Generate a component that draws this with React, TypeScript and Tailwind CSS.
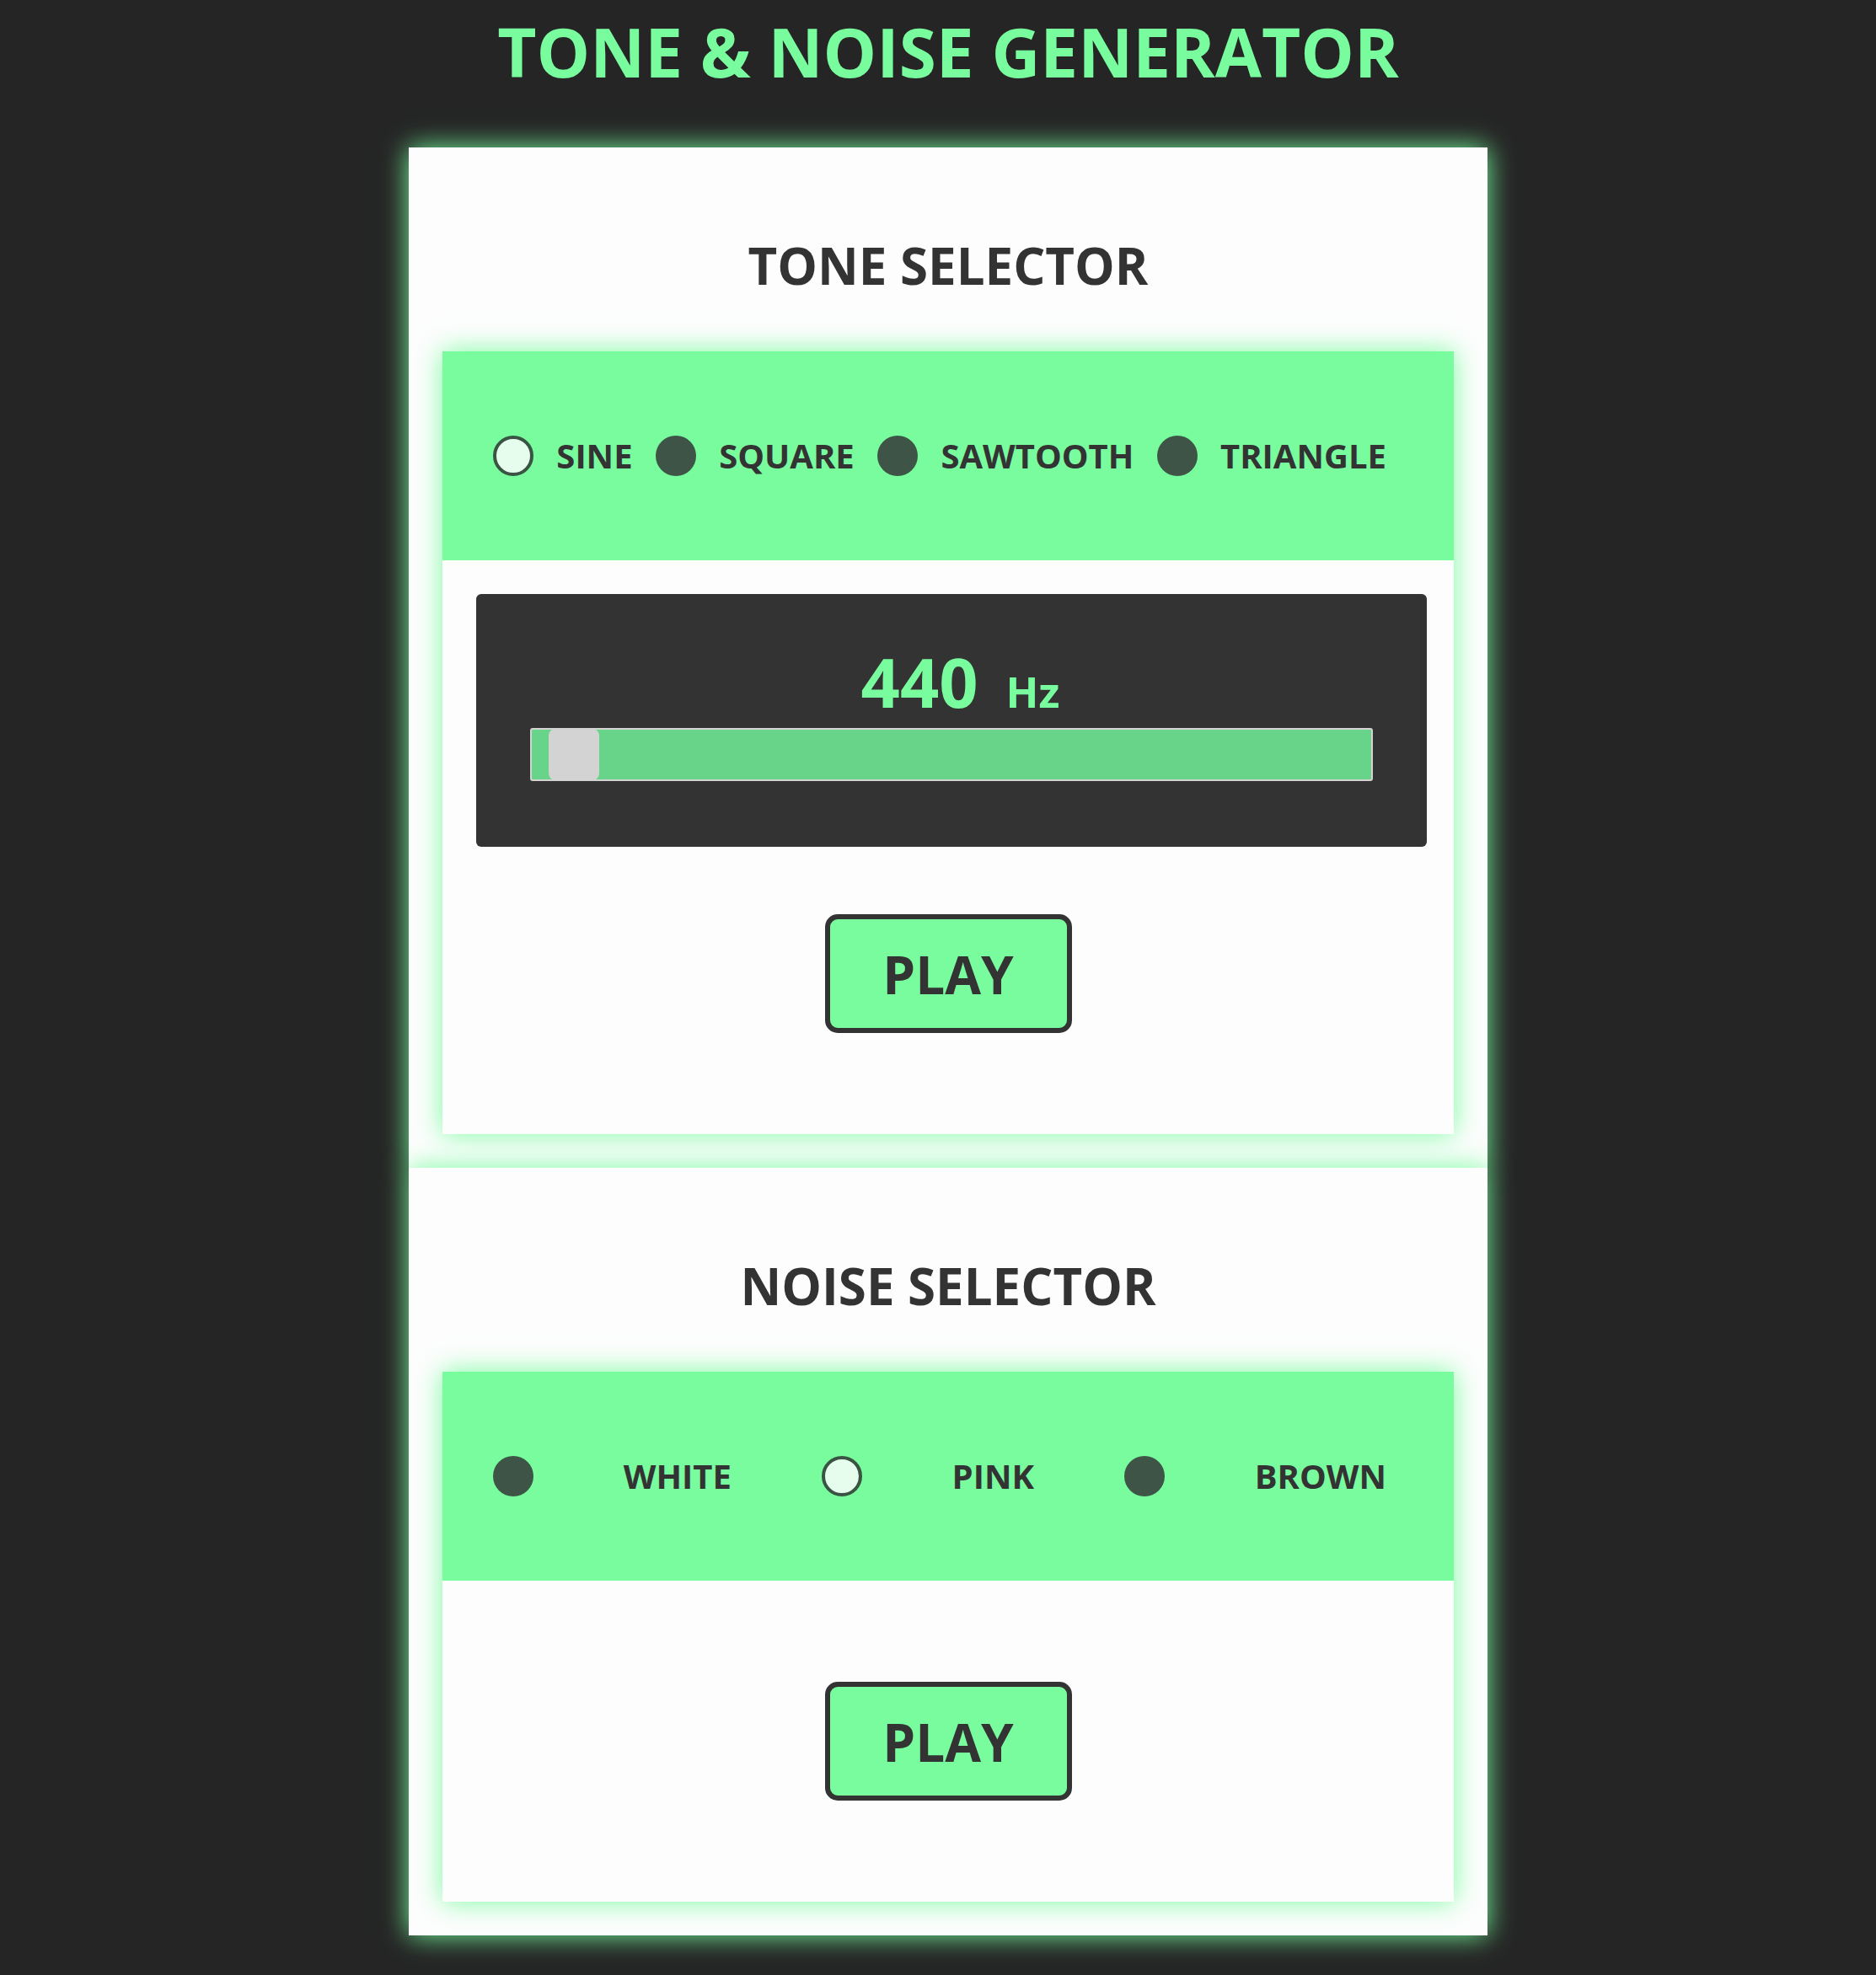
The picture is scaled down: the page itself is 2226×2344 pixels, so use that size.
const font = { fontFamily: '"Open Sans", "Noto Sans", sans-serif' };

type Option = { label: string; checked?: boolean };

const tones: Option[] = [
  { label: 'SINE', checked: true },
  { label: 'SQUARE' },
  { label: 'SAWTOOTH' },
  { label: 'TRIANGLE' },
];

const noises: Option[] = [{ label: 'WHITE' }, { label: 'PINK', checked: true }, { label: 'BROWN' }];

function Radio({ checked }: { checked?: boolean }) {
  return checked ? (
    <span className="block h-[48px] w-[48px] rounded-full border-4 border-[#3a5444] bg-[#e6fcec]" />
  ) : (
    <span className="block h-[48px] w-[48px] rounded-full bg-[#3d5446]" />
  );
}

function OptionRow({ options }: { options: Option[] }) {
  return (
    <div className="flex h-[248px] items-center justify-between bg-[#78fc9e] pl-[60px] pr-[80px]">
      {options.map((o) => [
        <Radio key={o.label + '-r'} checked={o.checked} />,
        <span key={o.label} className="text-[40px] font-bold leading-none text-[#333]">
          {o.label}
        </span>,
      ])}
    </div>
  );
}

function PlayButton() {
  return (
    <button className="mx-auto block h-[141px] w-[293px] rounded-[15px] border-[6px] border-[#333] bg-[#78fc9e] text-[62px] font-bold leading-none text-[#333]">
      PLAY
    </button>
  );
}

function Heading({ children }: { children: string }) {
  return (
    <h2 className="pt-[97px] pb-[59px] text-center text-[60px] font-bold leading-[86px] text-[#333]">{children}</h2>
  );
}

export default function App() {
  return (
    <div className="min-h-screen bg-[#252525] pl-6 pt-[4px]" style={font}>
      <h1 className="mb-[58px] text-center text-[80px] font-bold leading-[113px] text-[#78fc9e]">
        TONE &amp; NOISE GENERATOR
      </h1>
      <main className="mx-auto w-[1280px]">
        <section className="bg-[#fdfdfd] px-10 pb-10 shadow-[0_0_30px_#78fc9e]">
          <Heading>TONE SELECTOR</Heading>
          <div className="bg-[#fdfdfd] shadow-[0_0_30px_#78fc9e]">
            <OptionRow options={tones} />
            <div className="pt-10 pb-[120px]">
              <div className="ml-10 h-[300px] w-[1128px] rounded-md bg-[#333] pt-[62px]">
                <div className="flex h-[84px] items-baseline justify-center pl-[21px] font-bold text-[#78fc9e]">
                  <span className="text-[81px] leading-[84px]">440</span>
                  <span className="ml-[33px] text-[51px] leading-none">Hz</span>
                </div>
                <div className="relative mx-auto mt-[13px] h-[63px] w-[1000px] rounded-[3px] border-2 border-[#d3d3d3] bg-[#68d48a]">
                  <span className="absolute left-[20px] top-[-1px] h-[61px] w-[60px] rounded-[8px] bg-[#d3d3d3]" />
                </div>
              </div>
              <div className="mt-20">
                <PlayButton />
              </div>
            </div>
          </div>
        </section>
        <section className="bg-[#fdfdfd] px-10 pb-10 shadow-[0_0_30px_#78fc9e]">
          <Heading>NOISE SELECTOR</Heading>
          <div className="bg-[#fdfdfd] shadow-[0_0_30px_#78fc9e]">
            <OptionRow options={noises} />
            <div className="py-[120px]">
              <PlayButton />
            </div>
          </div>
        </section>
      </main>
    </div>
  );
}
